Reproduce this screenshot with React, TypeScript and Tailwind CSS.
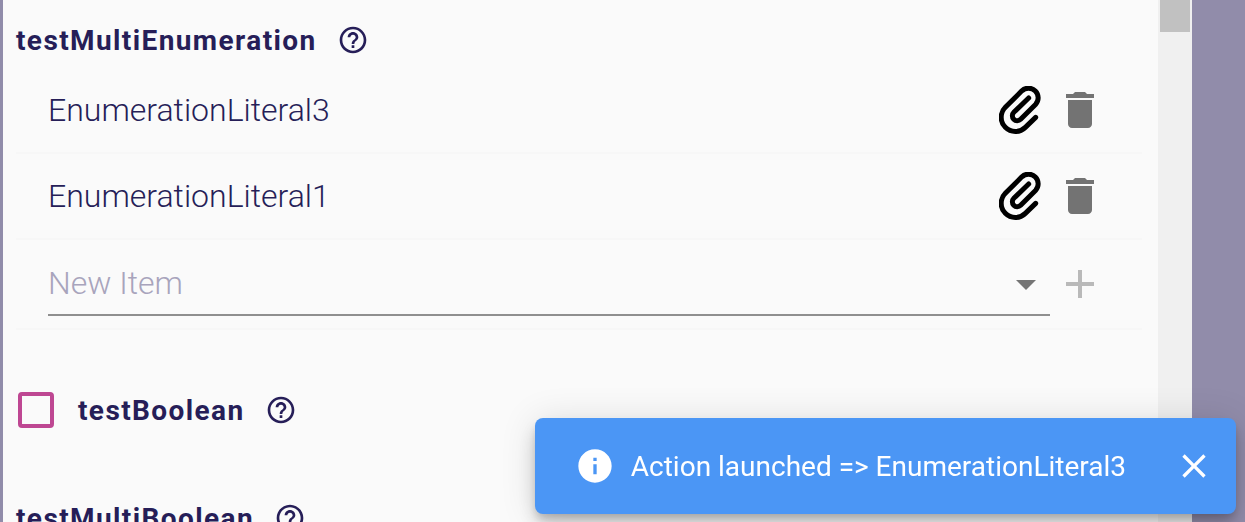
import React, { useState } from "react";
import {
  MdAdd,
  MdArrowDropDown,
  MdClose,
  MdDelete,
  MdHelpOutline,
  MdInfo,
} from "react-icons/md";

const literals = ["EnumerationLiteral1", "EnumerationLiteral2", "EnumerationLiteral3"];

function PaperclipIcon() {
  return (
    <svg
      viewBox="0 0 126 144"
      className="h-12 w-[42px]"
      fill="none"
      stroke="currentColor"
      strokeWidth="15"
      strokeLinecap="round"
      strokeLinejoin="round"
      aria-hidden="true"
    >
      <path d="M110 94 79 124A42 42 0 0 1 19 64L68.5 14.5A29 29 0 0 1 109.5 55.5L65 100A14.5 14.5 0 0 1 44.5 79L89 36" />
    </svg>
  );
}

function HelpButton({ name }: { name: string }) {
  return (
    <button type="button" aria-label={`Help for ${name}`} className="shrink-0">
      <MdHelpOutline className="size-8" />
    </button>
  );
}

function FieldTitle({ name }: { name: string }) {
  return (
    <div className="flex h-10 items-center gap-5">
      <h2 className="pt-0.5 text-[28px] leading-10 font-bold tracking-wider">{name}</h2>
      <HelpButton name={name} />
    </div>
  );
}

function ItemRow({ value, onDelete }: { value: string; onDelete: () => void }) {
  return (
    <li className="flex items-center border-b-2 border-[#f7f7f7] py-4 pr-[38px] pl-8">
      <span className="flex-1 text-[32px] leading-[52px] font-[350]">{value}</span>
      <button type="button" aria-label={`Run action on ${value}`} className="mr-[15px] text-black">
        <PaperclipIcon />
      </button>
      <button
        type="button"
        aria-label={`Delete ${value}`}
        onClick={onDelete}
        className="text-[#737373]"
      >
        <MdDelete className="size-12" />
      </button>
    </li>
  );
}

export default function App() {
  const [items, setItems] = useState(["EnumerationLiteral3", "EnumerationLiteral1"]);
  const [choice, setChoice] = useState("");
  const [checked, setChecked] = useState(false);
  const [open, setOpen] = useState(true);

  const addItem = () => {
    if (choice) {
      setItems([...items, choice]);
      setChoice("");
    }
  };

  return (
    <div className="flex h-screen overflow-hidden bg-[#918caa] pr-[53px] pl-[3px] font-[Roboto,sans-serif] text-[#261e58]">
      <main className="min-w-0 flex-1 overflow-hidden bg-[#fafafa] pt-5 pr-4 pl-[13px]">
        <FieldTitle name="testMultiEnumeration" />
        <ul className="mt-2">
          {items.map((value, index) => (
            <ItemRow
              key={index}
              value={value}
              onDelete={() => setItems(items.filter((_, i) => i !== index))}
            />
          ))}
          <li className="flex items-center border-b-2 border-[#f7f7f7] py-3 pr-[38px] pl-8">
            <div className="grid flex-1 items-center">
              <select
                aria-label="New Item"
                value={choice}
                onChange={(event) => setChoice(event.target.value)}
                className="col-start-1 row-start-1 h-16 w-full appearance-none border-b-2 border-[#8f8f8f] bg-transparent text-[32px] font-[350] text-[#a8a4bc] outline-none"
              >
                <option value="">New Item</option>
                {literals.map((literal) => (
                  <option key={literal} value={literal}>
                    {literal}
                  </option>
                ))}
              </select>
              <MdArrowDropDown className="pointer-events-none col-start-1 row-start-1 size-12 justify-self-end text-[#757575]" />
            </div>
            <button
              type="button"
              aria-label="Add item"
              onClick={addItem}
              className="ml-[6px] text-[#b9b9b9]"
            >
              <MdAdd className="size-12" />
            </button>
          </li>
        </ul>

        <div className="mt-[60px] flex h-10 items-center gap-5">
          <label className="flex items-center gap-6 pl-[2px] text-[28px] leading-10 font-bold tracking-wider">
            <input
              type="checkbox"
              checked={checked}
              onChange={(event) => setChecked(event.target.checked)}
              className="size-9 appearance-none rounded-sm border-4 border-[#be4792] checked:bg-[#be4792]"
            />
            <span className="pt-0.5">testBoolean</span>
          </label>
          <HelpButton name="testBoolean" />
        </div>

        <div className="mt-[68px]">
          <FieldTitle name="testMultiBoolean" />
        </div>
      </main>

      <div aria-hidden="true" className="w-[34px] bg-[#f0f0f0] px-[2px]">
        <div className="h-8 bg-[#c1c1c1]" />
      </div>

      {open && (
        <div
          role="status"
          className="fixed right-[9px] bottom-2 flex h-24 items-center rounded-lg bg-[#4b96f5] pr-[22px] pl-10 text-white shadow-[0_6px_10px_-2px_rgba(0,0,0,0.2),0_12px_20px_0_rgba(0,0,0,0.14),0_2px_36px_0_rgba(0,0,0,0.12)]"
        >
          <MdInfo className="size-10" />
          <span className="ml-4 pt-0.5 text-[28px] leading-10 whitespace-nowrap">
            Action launched =&gt; EnumerationLiteral3
          </span>
          <button
            type="button"
            aria-label="Close"
            onClick={() => setOpen(false)}
            className="ml-12"
          >
            <MdClose className="size-10" />
          </button>
        </div>
      )}
    </div>
  );
}
